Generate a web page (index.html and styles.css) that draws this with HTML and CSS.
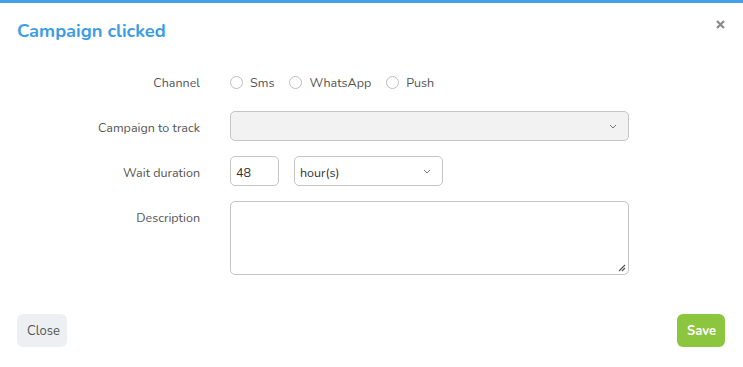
FILE: index.html
```html
<!DOCTYPE html>
<html>
<head>
<meta charset="utf-8">
<link rel="stylesheet" href="styles.css">
</head>
<body>
<div class="modal">
  <div class="header">
    <h1 class="title">Campaign clicked</h1>
    <span class="close-x">
      <svg width="9" height="9" viewBox="0 0 9 9"><path d="M1 1L8 8M8 1L1 8" stroke="#8a8a8a" stroke-width="2.2" stroke-linecap="butt"/></svg>
    </span>
  </div>
  <div class="form">
    <div class="label">Channel</div>
    <div class="field radios">
      <label class="radio"><span class="circle"></span>Sms</label>
      <label class="radio"><span class="circle"></span>WhatsApp</label>
      <label class="radio"><span class="circle"></span>Push</label>
    </div>

    <div class="label">Campaign to track</div>
    <div class="field">
      <div class="select wide disabled"><span></span><svg class="chev" width="8" height="5" viewBox="0 0 8 5"><path d="M1 1L4 4L7 1" fill="none" stroke="#777" stroke-width="1"/></svg></div>
    </div>

    <div class="label">Wait duration</div>
    <div class="field duration">
      <div class="input num"><span class="txt">48</span></div>
      <div class="select unit"><span class="txt">hour(s)</span><svg class="chev" width="8" height="5" viewBox="0 0 8 5"><path d="M1 1L4 4L7 1" fill="none" stroke="#777" stroke-width="1"/></svg></div>
    </div>

    <div class="label">Description</div>
    <div class="field">
      <div class="textarea">
        <svg class="grip" width="8" height="8" viewBox="0 0 8 8"><path d="M7 1L1 7M7 4L4 7" stroke="#555" stroke-width="1.2"/></svg>
      </div>
    </div>
  </div>
  <div class="footer">
    <button class="btn btn-close">Close</button>
    <button class="btn btn-save">Save</button>
  </div>
</div>
</body>
</html>
```

FILE: styles.css
```css
* { box-sizing: border-box; }
html, body { margin: 0; padding: 0; background: #fff; }
body {
  font-family: "Nunito", "Lato", "Noto Sans", sans-serif;
  font-size: 12.5px;
  color: #444;
  width: 743px;
  height: 367px;
  overflow: hidden;
}
.modal {
  border-top: 3px solid #43a0e8;
  height: 367px;
  display: flex;
  flex-direction: column;
}
.header {
  display: flex;
  justify-content: space-between;
  align-items: flex-start;
  padding: 0 18px 0 17px;
  height: 63px;
}
.title {
  margin: 16px 0 0;
  font-size: 18.3px;
  font-weight: 700;
  color: #3d9ce6;
}
.close-x {
  margin-top: 17px;
  display: flex;
}
.form {
  display: grid;
  grid-template-columns: 200px 399px;
  column-gap: 30px;
  row-gap: 15px;
}
.label {
  text-align: right;
  color: #555;
  height: 30px;
  line-height: 34px;
}
.field { display: flex; align-items: center; min-height: 30px; }
.radios { padding-top: 3px; }
.radio {
  display: flex;
  align-items: center;
  color: #555;
  margin-right: 15px;
}
.circle {
  width: 13px;
  height: 13px;
  border: 1px solid #bdbdbd;
  border-radius: 50%;
  margin: 0 7px 0 0;
  background: #fff;
}
.select, .input, .textarea {
  border: 1px solid #c4c4c4;
  border-radius: 5px;
  background: #fff;
  height: 30px;
}
.select {
  display: flex;
  align-items: center;
  justify-content: space-between;
  padding: 0 11px 0 5px;
  color: #333;
}
.txt { padding-top: 3px; }
.wide { width: 399px; }
.disabled { background: #f2f2f2; }
.duration { gap: 15px; }
.input.num {
  width: 49px;
  display: flex;
  align-items: center;
  padding-left: 5px;
  color: #333;
}
.unit { width: 149px; }
.chev { display: block; }
.textarea {
  width: 399px;
  height: 74px;
  position: relative;
}
.grip { position: absolute; right: 2px; bottom: 2px; }
.footer {
  margin-top: auto;
  display: flex;
  justify-content: space-between;
  padding: 0 18px 20px 17px;
}
.btn {
  font-family: inherit;
  font-size: 13px;
  height: 33px;
  border: none;
  border-radius: 6px;
  padding: 0 10px;
  cursor: pointer;
}
.btn-close { background: #ecf0f3; color: #555; width: 50px; }
.btn-save { background: #8cc63f; color: #fff; font-weight: 700; width: 48px; }
```
